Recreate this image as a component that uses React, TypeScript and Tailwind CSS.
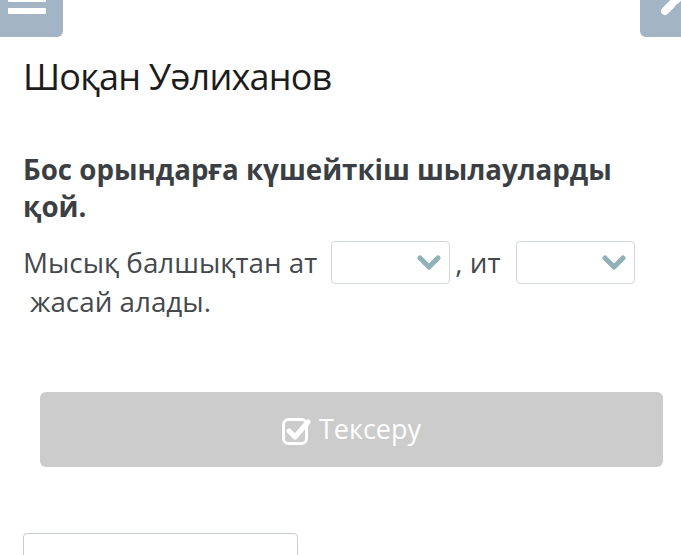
import React from "react";

function Chevron() {
  return (
    <svg width="24" height="16" viewBox="0 0 24 16" className="block">
      <path d="M3 3 L12 12 L21 3" fill="none" stroke="#8fb1b7" strokeWidth="5" strokeLinecap="round" strokeLinejoin="round" />
    </svg>
  );
}

function Select() {
  return (
    <div className="w-[119px] h-[43px] shrink-0 border border-[#d3d8dc] rounded-[4px] bg-white flex items-center justify-end pr-[8px]">
      <Chevron />
    </div>
  );
}

export default function App() {
  return (
    <div className="w-[681px] h-[555px] bg-white overflow-hidden relative" style={{ fontFamily: '"Open Sans", sans-serif' }}>
      <div className="flex justify-between h-[37px]">
        <div className="w-[63px] h-[37px] bg-[#a3b5c4] rounded-br-[6px] relative overflow-hidden">
          <div className="absolute left-[8px] top-[-4px] w-[38px] h-[6px] bg-white rounded-[1px]" />
          <div className="absolute left-[8px] top-[8px] w-[38px] h-[6px] bg-white rounded-[1px]" />
        </div>
        <div className="w-[41px] h-[37px] bg-[#a3b5c4] rounded-bl-[6px] relative overflow-hidden">
          <svg width="41" height="37" viewBox="0 0 41 37" className="absolute left-0 top-0">
            <path d="M25 11 L42 -6" stroke="white" strokeWidth="8" strokeLinecap="round" />
            <path d="M36 5 L46 15" stroke="#a3b5c4" strokeWidth="4" />
          </svg>
        </div>
      </div>
      <div className="px-[23px]">
        <h1 className="text-[36px] leading-[44px] mt-[18px] text-[#1c1c1c] font-normal tracking-[-0.8px]">Шоқан Уәлиханов</h1>
        <h2 className="text-[27.7px] leading-[37px] mt-[52px] font-bold text-[#3b3f43]">Бос орындарға күшейткіш шылауларды қой.</h2>
        <div className="mt-[16px] text-[27.8px] text-[#45494d]">
          <div className="flex items-center h-[43px] leading-[43px]">
            <span className="mr-[14px] whitespace-nowrap">Мысық балшықтан ат</span>
            <Select />
            <span className="ml-[5px] mr-[15px] whitespace-nowrap">, ит</span>
            <Select />
          </div>
          <div className="leading-[38px] mt-[-2px] pl-[7px]">жасай алады.</div>
        </div>
        <div className="ml-[17px] w-[623px] mt-[72px] h-[75px] bg-[#cccccc] rounded-[6px] flex items-center justify-center gap-[8px] text-white text-[27px]">
          <svg width="29" height="30" viewBox="0 0 29 30">
            <rect x="1.5" y="4.5" width="23" height="24" rx="5" fill="none" stroke="white" strokeWidth="3" />
            <path d="M7 16 L13 22 L26 7" fill="none" stroke="white" strokeWidth="5" strokeLinecap="round" strokeLinejoin="round" />
          </svg>
          <span>Тексеру</span>
        </div>
        <div className="mt-[66px] w-[275px] h-[40px] border border-[#c8cdd1] rounded-[4px]" />
      </div>
    </div>
  );
}
